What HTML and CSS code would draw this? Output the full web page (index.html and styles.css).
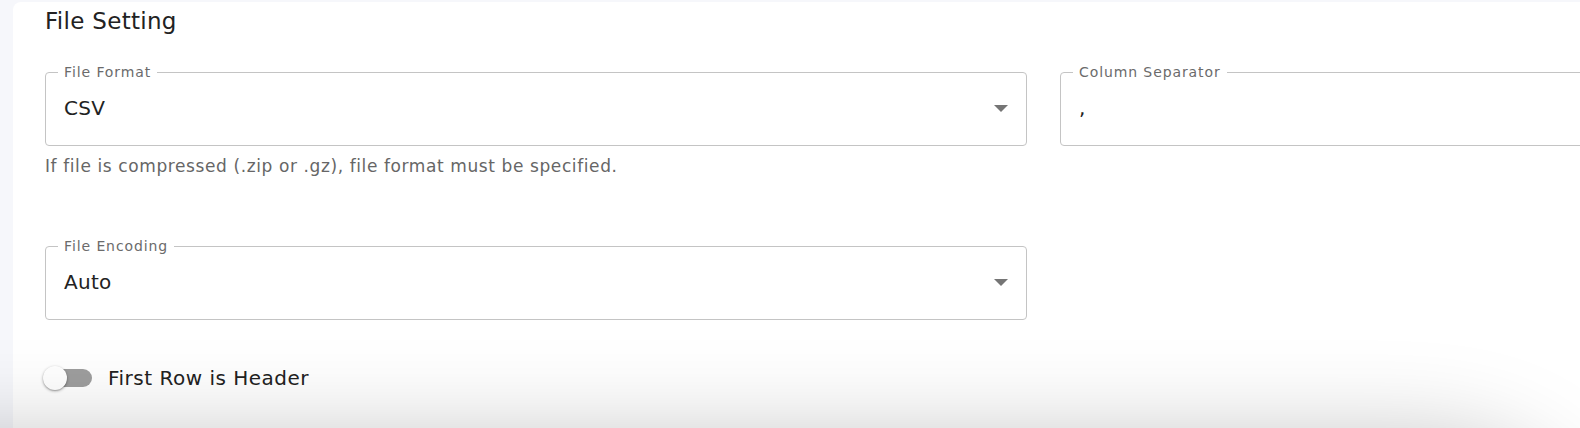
FILE: index.html
```html
<!DOCTYPE html>
<html lang="en">
<head>
<meta charset="utf-8">
<title>File Setting</title>
<link rel="stylesheet" href="styles.css">
</head>
<body>
<div class="page">
  <section class="card">
    <h2 class="title">File Setting</h2>
    <div class="grid">
      <div class="group">
        <fieldset class="field">
          <legend>File Format</legend>
          <div class="control">
            <span class="value">CSV</span>
            <span class="arrow"></span>
          </div>
        </fieldset>
        <p class="helper">If file is compressed (.zip or .gz), file format must be specified.</p>
      </div>
      <div class="group">
        <fieldset class="field">
          <legend>Column Separator</legend>
          <div class="control">
            <span class="value">,</span>
          </div>
        </fieldset>
      </div>
      <div class="group">
        <fieldset class="field">
          <legend>File Encoding</legend>
          <div class="control">
            <span class="value">Auto</span>
            <span class="arrow"></span>
          </div>
        </fieldset>
      </div>
    </div>
    <label class="switch-row">
      <span class="switch"><span class="track"></span><span class="thumb"></span></span>
      <span class="switch-label">First Row is Header</span>
    </label>
  </section>
  <div class="fade"><div class="fade-shape"></div></div>
</div>
</body>
</html>
```

FILE: styles.css
```css
* { box-sizing: border-box; }
html, body {
  margin: 0;
  padding: 0;
  width: 1580px;
  height: 428px;
  overflow: hidden;
  background: #f6f7fb;
  font-family: "DejaVu Sans", "Open Sans", sans-serif;
  color: #222;
}
.page {
  position: relative;
  width: 1580px;
  height: 428px;
  overflow: hidden;
  padding: 2px 0 0 13px;
}
.card {
  background: #fff;
  width: 2200px;
  height: 600px;
  border-radius: 8px 0 0 0;
  padding: 5px 0 0 32px;
}
.title {
  margin: 0;
  font-size: 23px;
  font-weight: 400;
  line-height: 28px;
  letter-spacing: 0.3px;
  color: #222;
}
.grid {
  margin-top: 30px;
  display: grid;
  grid-template-columns: 982px 982px;
  column-gap: 33px;
  row-gap: 63px;
  align-items: start;
}
.field {
  margin: 0;
  padding: 0 18px 8px 18px;
  border: 1px solid #c4c4c4;
  border-radius: 4px;
  min-width: 0;
}
.field legend {
  margin-left: -6px;
  padding: 0 6px;
  font-size: 14px;
  line-height: 14px;
  letter-spacing: 0.9px;
  color: #6b6b6b;
}
.control {
  height: 58px;
  display: flex;
  align-items: center;
  justify-content: space-between;
}
.value {
  font-size: 20px;
  letter-spacing: 0.3px;
  color: #222;
}
.arrow {
  width: 0;
  height: 0;
  border-left: 7px solid transparent;
  border-right: 7px solid transparent;
  border-top: 7px solid #757575;
}
.helper {
  margin: 10px 0 0 0;
  font-size: 17px;
  line-height: 20px;
  letter-spacing: 0.6px;
  color: #666;
}
.switch-row {
  margin-top: 44px;
  display: flex;
  align-items: center;
  height: 28px;
  gap: 16px;
}
.switch {
  position: relative;
  width: 49px;
  height: 24px;
  margin-left: -2px;
  display: flex;
  align-items: center;
}
.track {
  margin-left: 3px;
  width: 46px;
  height: 18px;
  border-radius: 9px;
  background: #9e9e9e;
}
.thumb {
  position: absolute;
  left: 0;
  top: 0;
  width: 24px;
  height: 24px;
  border-radius: 50%;
  background: #fff;
  box-shadow: 0 1px 3px rgba(0,0,0,0.35), 0 1px 1px rgba(0,0,0,0.12);
}
.switch-label {
  font-size: 20px;
  letter-spacing: 0.5px;
  color: #222;
}
.fade {
  position: absolute;
  left: 0;
  top: 0;
  width: 1580px;
  height: 428px;
  overflow: hidden;
  pointer-events: none;
}
.fade-shape {
  position: absolute;
  left: -200px;
  top: 445px;
  width: 1790px;
  height: 300px;
  border-radius: 0 160px 0 0;
  background: #888;
  box-shadow: 0 0 100px 0 rgba(0,0,0,0.28);
}
```
